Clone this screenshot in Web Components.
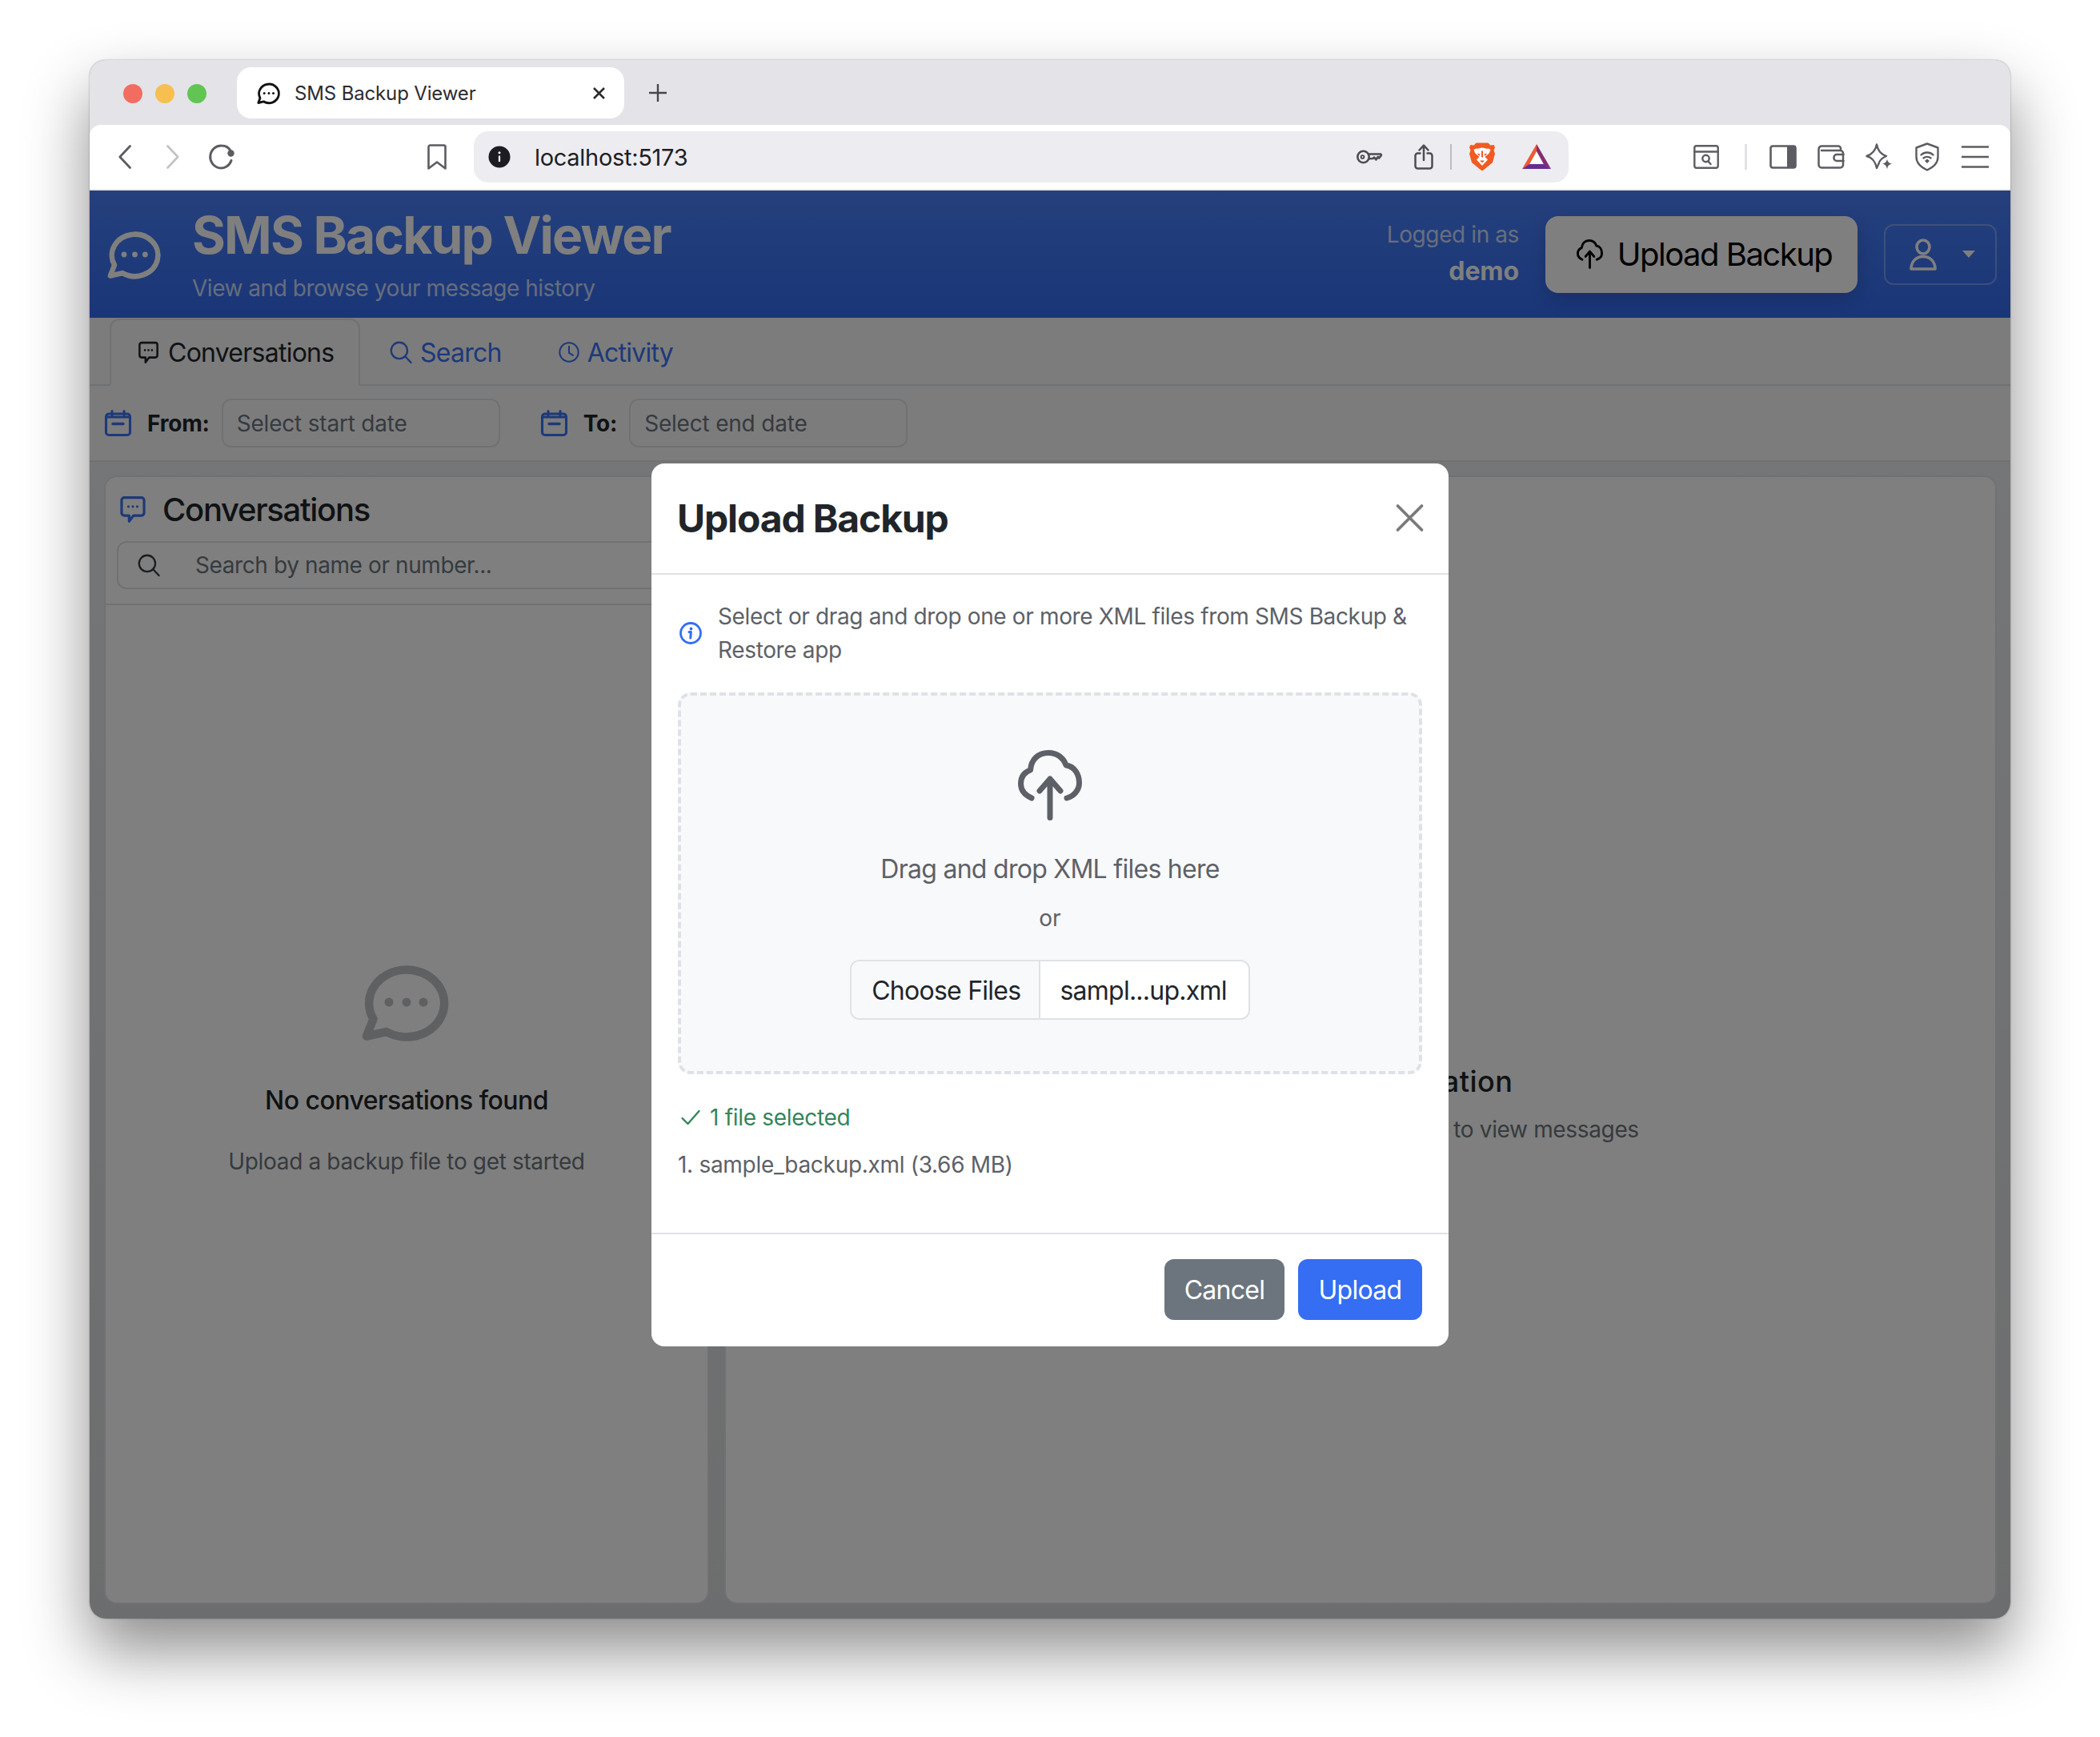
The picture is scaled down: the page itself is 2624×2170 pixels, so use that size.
<!DOCTYPE html>
<html lang="en">
<head>
<meta charset="utf-8">
<title>SMS Backup Viewer</title>
<style>
  html, body { margin: 0; padding: 0; background: #fff; }
  body { display: flow-root; min-height: 2170px; font-family: Inter, "Liberation Sans", sans-serif; }
</style>
</head>
<body>
<browser-window>
  <sms-app>
    <upload-modal></upload-modal>
  </sms-app>
</browser-window>

<script>
const s = 'fill="none" stroke="currentColor" stroke-linecap="round" stroke-linejoin="round"';
const chatRound = `<path ${s} stroke-width="10.500" d="M33 85A47 42 0 1 0 16.500 69L8 90.500Z"/><g fill="currentColor"><circle cx="36" cy="48" r="5.500"/><circle cx="58" cy="48" r="5.500"/><circle cx="79" cy="48" r="5.500"/></g>`;

const icons = {
  chat: ['5 0 106 96', chatRound],
  chatSquare: ['0 0 16 16', `<path ${s} stroke-width="1.500" d="M3 1.200h10A1.600 1.600 0 0 1 14.600 2.800v7.400A1.600 1.600 0 0 1 13 11.800H8.400L5.800 15.200v-3.400H3a1.600 1.600 0 0 1-1.600-1.600V2.800A1.600 1.600 0 0 1 3 1.200z"/><g fill="currentColor"><circle cx="5.400" cy="6.500" r=".75"/><circle cx="8" cy="6.500" r=".75"/><circle cx="10.600" cy="6.500" r=".75"/></g>`],
  search: ['0 0 16 16', `<g ${s} stroke-width="1.300"><circle cx="6.800" cy="6.800" r="5.800"/><path d="M11 11l4.200 4.400"/></g>`],
  clock: ['0 0 16 16', `<g ${s} stroke-width="1.250"><circle cx="8" cy="8" r="7.200"/><path d="M8 3.600V8.500l3 1.900"/></g>`],
  calendar: ['0 0 33 33', `<g ${s} stroke-width="3.100"><rect x="1.500" y="5" width="30" height="26.500" rx="3.500"/><path d="M9 1.500V7M24 1.500V7M1.500 9h30"/><path d="M10 17.500h13" stroke-width="3.400"/></g>`],
  cloud: ['0 0 80 88', `<g ${s} stroke-width="7"><path d="M17 60C8 56 3.500 50 3.500 42 3.500 33 8.500 27.500 15.500 25 16.500 12 25 3.500 38 3.500 49 3.500 57 10 60 19 70.500 20.500 76.500 30 76.500 41 76.500 50 70 57.500 61 60"/><path d="M40 84.500V36M27 51 40 36 53 51"/></g>`],
  person: ['0 0 34 40', `<g ${s} stroke-width="3.600"><ellipse cx="17" cy="10.500" rx="8" ry="8.500"/><path d="M2 38C2 29 8 22.500 17 22.500S32 29 32 38Z"/></g>`],
  close: ['0 0 33 32', `<path ${s} stroke-width="3.800" stroke-linecap="butt" d="M1.500 1 31.500 31M31.500 1 1.500 31"/>`],
  info: ['0 0 28 28', `<g ${s}><circle cx="14" cy="14" r="12.500" stroke-width="2.800"/><path stroke-width="3" d="M12 12.500h2.400L13.800 20"/></g><circle cx="14.500" cy="8.500" r="1.900" fill="currentColor"/>`],
  check: ['0 0 24 20', `<path ${s} stroke-width="2.400" d="M1.500 11 8.500 18 22.500 2"/>`],
  back: ['0 0 16 30', `<path ${s} stroke-width="2.800" d="M14.500 1.500 1.800 15 14.500 28.500"/>`],
  forward: ['0 0 16 30', `<path ${s} stroke-width="2.800" d="M1.500 1.500 14.200 15 1.500 28.500"/>`],
  reload: ['0 0 32 32', `<path ${s} stroke-width="3" d="M29 20.500A13.500 14 0 1 1 17 2C22 2 26 4.500 28 8.500"/><circle cx="28.500" cy="11.500" r="4.200" fill="currentColor"/>`],
  bookmark: ['0 0 24 32', `<path ${s} stroke-width="2.600" d="M3.500 1.500h17a2 2 0 0 1 2 2v27L12 22.500 1.500 30.500v-27a2 2 0 0 1 2-2z"/>`],
  siteInfo: ['0 0 28 28', `<circle cx="14" cy="14" r="13.500" fill="currentColor"/><path d="M14 12.500v7.500" stroke="#fff" stroke-width="2.200"/><circle cx="14" cy="8.800" r="1.500" fill="#fff"/>`],
  key: ['0 0 32 18', `<g ${s} stroke-width="2.600"><circle cx="8.500" cy="9" r="7.200"/><path d="M15.700 5.500h14a1.200 1.200 0 0 1 .9 2l-2.400 3-1.500-1.500-2.300 3.500-2.300-3-1.500 1.500-4.900.2"/></g><circle cx="7.500" cy="9" r="1.900" fill="none" stroke="currentColor" stroke-width="1.900"/>`],
  share: ['0 0 24 32', `<g ${s} stroke-width="2.500"><path d="M7.500 11.500H4.500a3 3 0 0 0-3 3V27.500a3 3 0 0 0 3 3h15a3 3 0 0 0 3-3V14.500a3 3 0 0 0-3-3h-3"/><path d="M12 20V2M6.500 7.500 12 1.700l5.500 5.800"/></g>`],
  brave: ['0 0 32 36', `<path fill="#f15a22" d="M8.500 0.500h15L26.500 3.500 30.500 3 32 6 30.500 10 32 14 29 25 20 32.500 16 35.500 12 32.500 3 25 0 14 1.500 10 0 6 1.500 3 5.500 3.500z"/><path fill="#fff" d="M16 6.500c-2.500 0-4.500 1.800-7.500 1l-3 1.500 1.500 4 2 2 3.500 3L9 21.500 16 29l7-7.500-3.500-3.500 3.500-3 2-2 1.500-4-3-1.500c-3 .8-5-1-7.500-1z"/><path fill="#f15a22" d="M9.500 13.500l4 1-1 2.500zM22.500 13.500l-4 1 1 2.500zM15 10.500h2v8h-2zM13 22.500h6L16 25.500z"/>`],
  bat: ['0 0 36 32', `<path fill="#ef5a32" d="M18 0 0 31 9 25.500 18 9z"/><path fill="#872a72" d="M18 0 36 31 27 25.500 18 9z"/><path fill="#662d91" d="M0 31H36L27 25H9z"/><path fill="#fff" d="M18 10 26.500 25H9.500z"/>`],
  panelSearch: ['0 0 32 30', `<g ${s} stroke-width="2.400"><rect x="1.300" y="1.300" width="29.400" height="27.400" rx="2.500"/><path d="M1.300 8.500h29.400"/><circle cx="15.500" cy="17" r="4.200"/><path d="M18.500 20.500l3 3.500"/></g>`],
  sidebar: ['0 0 34 30', `<rect x="1.500" y="1.500" width="31" height="27" rx="2.500" fill="none" stroke="currentColor" stroke-width="2.600"/><rect x="22" y="1.500" width="10.500" height="27" fill="currentColor"/>`],
  wallet: ['0 0 34 30', `<g ${s} stroke-width="2.500"><path d="M5 1.500h21a3 3 0 0 1 3 3V7M1.500 5.500A4 4 0 0 1 5 1.500M1.500 5.500V25A3.500 3.500 0 0 0 5 28.500H28.500A3.500 3.500 0 0 0 32 25V10.500A3.500 3.500 0 0 0 28.500 7H5"/><path d="M32.500 12H24a3.500 3.500 0 0 0-3.500 3.500v1A3.500 3.500 0 0 0 24 20H32.500"/></g>`],
  sparkle: ['0 0 34 34', `<path ${s} stroke-width="2.400" d="M14 1.500C15.500 9 18.500 13 26 16 21 18 17.500 21 16.500 25.500L14 31C12 22 8.500 18 1.500 16 8.500 13.500 12.500 9.500 14 1.500Z"/><path fill="currentColor" d="M27 19.500c.6 3.500 2 5.200 6 6-3.800 1-5.200 2.500-6 7-.7-4.200-2.300-6-5.800-7 3.800-.9 5.100-2.500 5.800-6z"/>`],
  shield: ['0 0 30 36', `<g ${s} stroke-width="2.400"><path d="M15 1.500 28.500 6.500V18C28.500 25.500 22.500 31 15 34.500 7.500 31 1.500 25.500 1.500 18V6.500Z"/><path d="M7.500 15.500C11.500 11.500 18.500 11.500 22.500 15.500M10.500 19.500C13 17.300 17 17.300 19.500 19.500"/></g><path fill="currentColor" d="M15 20.500l3 2.600L15 26l-3-2.900z"/>`],
  menu: ['0 0 34 28', `<path stroke="currentColor" stroke-width="2.600" d="M0 1.500H34M0 14H34M0 26.500H34"/>`],
  plus: ['0 0 22 22', `<path stroke="currentColor" stroke-width="2.400" d="M11 0V22M0 11H22"/>`],
  tabClose: ['0 0 15 15', `<path stroke="currentColor" stroke-width="2.600" d="M1 1 14 14M14 1 1 14"/>`],
  caret: ['0 0 16 9', `<path fill="currentColor" d="M0 0H16L8 9z"/>`],
};

class AppIcon extends HTMLElement {
  connectedCallback() {
    const [box, body] = icons[this.getAttribute('name')];
    const w = this.getAttribute('w');
    const h = this.getAttribute('h');
    this.attachShadow({ mode: 'open' }).innerHTML = `
      <style>
        :host { display: inline-flex; flex: none; width: ${w}px; height: ${h}px; }
        svg { display: block; overflow: visible; }
      </style>
      <svg width="${w}" height="${h}" viewBox="${box}" preserveAspectRatio="none">${body}</svg>`;
  }
}
customElements.define('app-icon', AppIcon);

class BrowserWindow extends HTMLElement {
  connectedCallback() {
    this.attachShadow({ mode: 'open' }).innerHTML = `
      <style>
        :host {
          display: flex; flex-direction: column;
          width: 2400px; height: 1947px; margin: 75px 0 0 112px;
          border-radius: 20px; overflow: hidden; background: #e3e3e8;
          box-shadow: 0 40px 80px rgba(0,0,0,.45), 0 0 2px rgba(0,0,0,.4);
        }
      </style>
      <tab-strip></tab-strip>
      <browser-toolbar></browser-toolbar>
      <slot></slot>`;
  }
}
customElements.define('browser-window', BrowserWindow);

class TabStrip extends HTMLElement {
  connectedCallback() {
    this.attachShadow({ mode: 'open' }).innerHTML = `
      <style>
        :host { display: flex; align-items: center; height: 81px; padding: 0 0 0 42px; box-sizing: border-box; flex: none; font-size: 24px; color: #2c2c30; }
        .lights { display: flex; gap: 16px; margin-right: 38px; margin-top: 3px; }
        .lights i { width: 24px; height: 24px; border-radius: 50%; }
        .tab { display: flex; align-items: center; gap: 18px; width: 484px; height: 64px; box-sizing: border-box; padding: 0 24px 0 26px; background: #fff; border-radius: 18px; margin-top: 1px; }
        .tab app-icon:first-child { color: #111; }
        .tab span { flex: 1; letter-spacing: -.15px; }
        .plus { margin: 1px 0 0 31px; color: #46464b; }
      </style>
      <div class="lights"><i style="background:#f26d60"></i><i style="background:#f6bf4f"></i><i style="background:#61c554"></i></div>
      <div class="tab">
        <app-icon name="chat" w="28" h="27"></app-icon>
        <span>SMS Backup Viewer</span>
        <app-icon name="tabClose" w="15" h="15"></app-icon>
      </div>
      <app-icon class="plus" name="plus" w="22" h="22"></app-icon>`;
  }
}
customElements.define('tab-strip', TabStrip);

class BrowserToolbar extends HTMLElement {
  connectedCallback() {
    this.attachShadow({ mode: 'open' }).innerHTML = `
      <style>
        :host { display: flex; align-items: center; flex: none; height: 82px; box-sizing: border-box; padding-left: 36px; background: #fff; border-bottom: 2px solid #e7e7ea; border-radius: 14px 14px 0 0; color: #5c5c62; }
        .omni { display: flex; align-items: center; width: 1368px; height: 64px; box-sizing: border-box; margin-left: 34px; padding: 0 22px 0 18px; background: #edecf1; border-radius: 18px; color: #4d4d52; }
        .url { margin-left: 30px; flex: 1; font-size: 29px; letter-spacing: -.3px; color: #1e1e22; }
        .sep { width: 2px; height: 32px; background: #bdbdc0; margin-left: 21px; }
        .rsep { width: 3px; height: 32px; background: #e2e2e4; margin-left: 32px; }
      </style>
      <app-icon name="back" w="16" h="30"></app-icon>
      <app-icon name="forward" w="16" h="30" style="margin-left:44px;color:#c4c4c6"></app-icon>
      <app-icon name="reload" w="32" h="32" style="margin-left:36px"></app-icon>
      <app-icon name="bookmark" w="24" h="32" style="margin-left:242px"></app-icon>
      <div class="omni">
        <app-icon name="siteInfo" w="28" h="28" style="color:#1c1c22"></app-icon>
        <span class="url">localhost:5173</span>
        <app-icon name="key" w="32" h="18"></app-icon>
        <app-icon name="share" w="24" h="32" style="margin-left:40px"></app-icon>
        <span class="sep"></span>
        <app-icon name="brave" w="32" h="36" style="margin-left:22px"></app-icon>
        <app-icon name="bat" w="36" h="32" style="margin-left:34px"></app-icon>
      </div>
      <app-icon name="panelSearch" w="32" h="30" style="margin-left:156px"></app-icon>
      <span class="rsep"></span>
      <app-icon name="sidebar" w="34" h="30" style="margin-left:28px"></app-icon>
      <app-icon name="wallet" w="34" h="30" style="margin-left:26px"></app-icon>
      <app-icon name="sparkle" w="34" h="34" style="margin-left:26px"></app-icon>
      <app-icon name="shield" w="30" h="36" style="margin-left:28px"></app-icon>
      <app-icon name="menu" w="34" h="28" style="margin-left:28px"></app-icon>`;
  }
}
customElements.define('browser-toolbar', BrowserToolbar);

class SmsApp extends HTMLElement {
  connectedCallback() {
    this.attachShadow({ mode: 'open' }).innerHTML = `
      <style>
        :host { display: flex; flex-direction: column; flex: 1; min-height: 0; position: relative; background: #f8f9fa; }
        .main { flex: 1; min-height: 0; display: grid; grid-template-columns: 756px 1fr; gap: 19px; padding: 17px 17px 18px 18px; background: linear-gradient(#eaecef, #d9dbdc); }
      </style>
      <app-header></app-header>
      <app-tabs></app-tabs>
      <date-filters></date-filters>
      <div class="main">
        <conversation-panel></conversation-panel>
        <message-panel></message-panel>
      </div>
      <slot></slot>`;
  }
}
customElements.define('sms-app', SmsApp);

class AppHeader extends HTMLElement {
  connectedCallback() {
    this.attachShadow({ mode: 'open' }).innerHTML = `
      <style>
        :host { display: flex; align-items: center; flex: none; height: 159px; box-sizing: border-box; padding: 0 17px 0 24px; background: linear-gradient(#4a80f8, #346cf0); color: #fff; }
        .logo { margin: 0 39px 0 0; }
        .brand { flex: 1; padding-top: 5px; }
        h1 { margin: 0 0 10px; font-size: 64px; line-height: 70px; font-weight: 700; letter-spacing: -1.8px; }
        p { margin: 0; font-size: 28px; line-height: 42px; letter-spacing: -.47px; color: rgba(255,255,255,.75); }
        .who { text-align: right; font-size: 28px; line-height: 46px; letter-spacing: -.4px; color: rgba(255,255,255,.75); margin: -3px 33px 0 0; }
        .who b { display: block; font-size: 32px; letter-spacing: -.1px; color: #fff; font-weight: 700; }
        button { display: flex; align-items: center; justify-content: center; gap: 18px; width: 390px; height: 96px; padding: 0 0 0 7px; border: 0; border-radius: 16px; background: #fff; color: #000; font: 400 40px Inter, sans-serif; letter-spacing: -1.5px; box-shadow: 0 8px 24px rgba(0,0,0,.15); }
        .user { display: flex; align-items: center; width: 141px; height: 76px; box-sizing: border-box; margin-left: 33px; padding-left: 30px; border: 2px solid rgba(255,255,255,.3); border-radius: 12px; color: #fff; }
        .user app-icon + app-icon { margin-left: 32px; }
      </style>
      <app-icon class="logo" name="chat" w="65" h="60"></app-icon>
      <div class="brand">
        <h1>SMS Backup Viewer</h1>
        <p>View and browse your message history</p>
      </div>
      <div class="who">Logged in as<b>demo</b></div>
      <button><app-icon name="cloud" w="33" h="37"></app-icon>Upload Backup</button>
      <div class="user">
        <app-icon name="person" w="34" h="40"></app-icon>
        <app-icon name="caret" w="16" h="9"></app-icon>
      </div>`;
  }
}
customElements.define('app-header', AppHeader);

class AppTabs extends HTMLElement {
  connectedCallback() {
    this.attachShadow({ mode: 'open' }).innerHTML = `
      <style>
        :host { display: flex; flex: none; height: 85px; box-sizing: border-box; padding: 1px 0 0 25px; border-bottom: 2px solid #dee2e6; font-size: 32px; letter-spacing: -.75px; color: #3b72f3; }
        a { display: flex; align-items: center; gap: 10px; box-sizing: border-box; height: 84px; padding: 0 32px 0 35px; border: 2px solid transparent; border-radius: 12px 12px 0 0; }
        a.on { width: 313px; gap: 11px; padding: 0 0 0 33px; background: #f8f9fa; border-color: #dee2e6 #dee2e6 #f8f9fa; color: #212529; }
        a.on app-icon { color: #212529; }
      </style>
      <a class="on"><app-icon name="chatSquare" w="27" h="28"></app-icon>Conversations</a>
      <a><app-icon name="search" w="28" h="28"></app-icon>Search</a>
      <a><app-icon name="clock" w="26" h="26"></app-icon>Activity</a>`;
  }
}
customElements.define('app-tabs', AppTabs);

class DateFilters extends HTMLElement {
  connectedCallback() {
    this.attachShadow({ mode: 'open' }).innerHTML = `
      <style>
        :host { display: flex; align-items: center; flex: none; height: 95px; box-sizing: border-box; padding-left: 19px; border-bottom: 2px solid #dee2e6; font-size: 28px; color: #212529; }
        app-icon { color: #3b72f3; margin-right: 20px; }
        b { font-weight: 700; margin-right: 15px; letter-spacing: -.2px; }
        .field { display: flex; align-items: center; width: 348px; height: 61px; box-sizing: border-box; padding-left: 17px; border: 2px solid #dee2e6; border-radius: 12px; background: #f8f9fa; color: #6c757d; letter-spacing: -.2px; }
        .field + app-icon { margin-left: 51px; }
      </style>
      <app-icon name="calendar" w="33" h="33"></app-icon>
      <b>From:</b>
      <div class="field">Select start date</div>
      <app-icon name="calendar" w="33" h="33"></app-icon>
      <b>To:</b>
      <div class="field">Select end date</div>`;
  }
}
customElements.define('date-filters', DateFilters);

class EmptyState extends HTMLElement {
  connectedCallback() {
    this.attachShadow({ mode: 'open' }).innerHTML = `
      <style>
        :host { display: flex; flex-direction: column; align-items: center; flex: 1; text-align: center; color: #212529; }
        app-icon { color: #bcc0c4; margin-bottom: 51px; }
        .title { font-size: var(--title-size, 32px); line-height: 48px; font-weight: 500; letter-spacing: var(--title-track, -.5px); }
        .sub { font-size: 28px; line-height: 46px; letter-spacing: -.35px; color: #6c757d; margin-top: var(--sub-gap, 29px); }
      </style>
      <app-icon name="chat" w="106" h="96"></app-icon>
      <div class="title"><slot name="title"></slot></div>
      <div class="sub"><slot name="sub"></slot></div>`;
  }
}
customElements.define('empty-state', EmptyState);

class ConversationPanel extends HTMLElement {
  connectedCallback() {
    this.attachShadow({ mode: 'open' }).innerHTML = `
      <style>
        :host { display: flex; flex-direction: column; min-height: 0; box-sizing: border-box; background: #fff; border: 2px solid #dee2e6; border-radius: 16px; color: #212529; }
        .head { flex: none; padding: 17px 14px 18px; border-bottom: 2px solid #dee2e6; }
        h2 { display: flex; align-items: center; gap: 20px; height: 46px; margin: 0 0 17px 3px; font-size: 40px; font-weight: 500; letter-spacing: -1.3px; }
        h2 app-icon { color: #3b72f3; }
        .find { display: flex; align-items: center; height: 60px; box-sizing: border-box; padding-left: 24px; gap: 44px; border: 2px solid #dee2e6; border-radius: 12px; color: #6c757d; font-size: 28px; letter-spacing: -.4px; }
        .find app-icon { color: #343a40; }
        empty-state { padding-top: 448px; }
        span { font: inherit; }
      </style>
      <div class="head">
        <h2><app-icon name="chatSquare" w="34" h="34"></app-icon>Conversations</h2>
        <div class="find"><app-icon name="search" w="28" h="28"></app-icon>Search by name or number...</div>
      </div>
      <empty-state>
        <span slot="title">No conversations found</span>
        <span slot="sub">Upload a backup file to get started</span>
      </empty-state>`;
  }
}
customElements.define('conversation-panel', ConversationPanel);

class MessagePanel extends HTMLElement {
  connectedCallback() {
    this.attachShadow({ mode: 'open' }).innerHTML = `
      <style>
        :host { display: flex; flex-direction: column; box-sizing: border-box; background: #fff; border: 2px solid #dee2e6; border-radius: 16px; }
        empty-state { padding-top: 584px; --title-size: 36px; --title-track: .5px; --sub-gap: 13px; }
      </style>
      <empty-state>
        <span slot="title">Select a conversation</span>
        <span slot="sub">Choose a conversation from the list to view messages</span>
      </empty-state>`;
  }
}
customElements.define('message-panel', MessagePanel);

class UploadModal extends HTMLElement {
  connectedCallback() {
    this.attachShadow({ mode: 'open' }).innerHTML = `
      <style>
        :host { position: absolute; inset: 0; display: flex; justify-content: center; align-items: flex-start; padding-top: 341px; box-sizing: border-box; background: rgba(0,0,0,.5); font-size: 28px; color: #212529; }
        .dialog { display: flex; flex-direction: column; width: 996px; height: 1103px; box-sizing: border-box; background: #fff; border-radius: 16px; overflow: hidden; }
        header { display: flex; align-items: center; justify-content: space-between; flex: none; height: 139px; box-sizing: border-box; padding: 0 32px 0 32px; border-bottom: 2px solid #dee2e6; }
        h3 { margin: 0; font-size: 48px; font-weight: 700; letter-spacing: -1.15px; }
        header app-icon { color: #7a7a7a; margin-top: -2px; }
        .body { flex: 1; padding: 31px 33px 0; }
        .info { display: flex; align-items: center; gap: 20px; line-height: 42px; letter-spacing: -.36px; color: #5d6167; margin-bottom: 32px; }
        .info app-icon { color: #356df3; margin-left: 2px; }
        .drop { display: flex; flex-direction: column; align-items: center; height: 477px; box-sizing: border-box; padding-top: 68px; border: 4px dashed #dee2e6; border-radius: 16px; background: #f8f9fa; color: #5d6167; }
        .drag { font-size: 32px; line-height: 48px; letter-spacing: -.72px; margin-top: 37px; }
        .or { line-height: 42px; margin-top: 16px; }
        .file { display: flex; height: 75px; box-sizing: border-box; margin-top: 31px; border: 2px solid #dee2e6; border-radius: 12px; background: #fff; color: #212529; font-size: 32px; letter-spacing: -.75px; line-height: 73px; overflow: hidden; }
        .file span { padding: 0 27px 0 24px; }
        .file .btn { padding: 0 23px 0 25px; background: #f8f9fa; border-right: 2px solid #dee2e6; }
        .picked { display: flex; align-items: center; gap: 12px; margin-top: 33px; line-height: 42px; letter-spacing: -.3px; color: #34855a; padding-left: 4px; }
        .list { margin-top: 17px; line-height: 42px; letter-spacing: -.3px; color: #5d6167; }
        footer { display: flex; justify-content: flex-end; gap: 17px; flex: none; height: 142px; box-sizing: border-box; padding: 31px 33px; border-top: 2px solid #dee2e6; }
        button { height: 76px; padding: 0; border: 0; border-radius: 12px; color: #fff; font: 400 32px Inter, sans-serif; letter-spacing: -.7px; }
        .cancel { width: 150px; background: #6c757d; }
        .upload { width: 155px; background: #356df3; }
      </style>
      <div class="dialog">
        <header>
          <h3>Upload Backup</h3>
          <app-icon name="close" w="33" h="32"></app-icon>
        </header>
        <div class="body">
          <div class="info">
            <app-icon name="info" w="28" h="28"></app-icon>
            <span>Select or drag and drop one or more XML files from SMS Backup &amp; Restore app</span>
          </div>
          <div class="drop">
            <app-icon name="cloud" w="80" h="88"></app-icon>
            <div class="drag">Drag and drop XML files here</div>
            <div class="or">or</div>
            <div class="file"><span class="btn">Choose Files</span><span>sampl...up.xml</span></div>
          </div>
          <div class="picked"><app-icon name="check" w="24" h="20"></app-icon>1 file selected</div>
          <div class="list">1. sample_backup.xml (3.66 MB)</div>
        </div>
        <footer>
          <button class="cancel">Cancel</button>
          <button class="upload">Upload</button>
        </footer>
      </div>`;
  }
}
customElements.define('upload-modal', UploadModal);
</script>
</body>
</html>
